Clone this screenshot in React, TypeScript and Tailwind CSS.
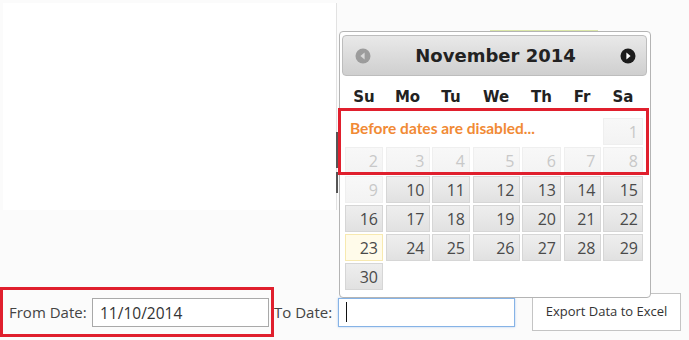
import React from "react";

const COLS = "grid grid-cols-[38px_44px_38px_47px_39px_37px_40px] gap-x-[2.5px]";

type Cell = { n?: number; kind: "empty" | "disabled" | "active" | "today" };

function DayCell({ c }: { c: Cell }) {
  if (c.kind === "empty") return <div className="h-[27px]" />;
  const base =
    "h-[27px] border flex items-center justify-end pr-[4px] text-[16px] leading-none font-['Open_Sans',sans-serif]";
  if (c.kind === "disabled")
    return (
      <div className={`${base} border-[#efefef] bg-gradient-to-b from-[#f8f8f8] to-[#f3f3f3] text-[#c8c8c8]`}>{c.n}</div>
    );
  if (c.kind === "today")
    return <div className={`${base} border-[#f7e9b0] bg-[#fffbea] text-[#4a4a4a]`}>{c.n}</div>;
  return (
    <div className={`${base} border-[#d6d6d6] bg-gradient-to-b from-[#eeeeee] via-[#e8e8e8] to-[#e1e1e1] text-[#4a4a4a]`}>
      {c.n}
    </div>
  );
}

export default function App() {
  const rows: Cell[][] = [];
  const r2: Cell[] = [2, 3, 4, 5, 6, 7, 8].map((n) => ({ n, kind: "disabled" }));
  const r3: Cell[] = [9, 10, 11, 12, 13, 14, 15].map((n) => ({ n, kind: n === 9 ? "disabled" : "active" }));
  const r4: Cell[] = [16, 17, 18, 19, 20, 21, 22].map((n) => ({ n, kind: "active" }));
  const r5: Cell[] = [23, 24, 25, 26, 27, 28, 29].map((n) => ({ n, kind: n === 23 ? "today" : "active" }));
  const r6: Cell[] = [{ n: 30, kind: "active" }, ...Array.from({ length: 6 }, () => ({ kind: "empty" as const }))];
  rows.push(r2, r3, r4, r5, r6);

  return (
    <div className="relative w-[689px] h-[340px] overflow-hidden bg-[#fbfbfb] font-['Open_Sans',sans-serif]">
      {/* page content */}
      <div className="flex flex-col">
        <div className="h-[287px]">
          <div className="ml-[3px] mt-[3px] w-[334px] h-[207px] bg-white border-r border-[#e2e2e2]" />
        </div>
        <div className="h-[50px] flex items-center pl-[9px] text-[15px] text-[#444444]">
          <span className="w-[83px] whitespace-nowrap">From Date:</span>
          <div className="w-[177px] h-[29px] border border-[#a9a9a9] bg-white flex items-center pl-[7px] pt-[3px] text-[15.5px] text-[#333333]">
            11/10/2014
          </div>
          <span className="ml-[5px] w-[64px] whitespace-nowrap">To Date:</span>
          <div className="w-[177px] h-[29px] border border-[#86b3e6] bg-white flex items-center pl-[7px] shadow-[0_0_2px_rgba(100,160,230,0.5)]">
            <span className="block w-px h-[20px] bg-[#111111]" />
          </div>
          <button className="ml-[17px] w-[149px] h-[38px] border border-[#c4c4c4] bg-white text-[13px] text-[#333333]">
            Export Data to Excel
          </button>
        </div>
      </div>

      {/* bits of content hidden behind the popup */}
      <div className="absolute left-[336px] top-[132px] w-[2px] h-[36px] bg-[#555555]" />
      <div className="absolute left-[336px] top-[172px] w-[2px] h-[21px] bg-[#555555]" />
      <div className="absolute left-[490px] top-[30px] w-[108px] h-px bg-[#dbe7a8]" />

      {/* datepicker popup */}
      <div className="absolute left-[339px] top-[31px] w-[312px] h-[267px] border border-[#b4b4b4] rounded-[4px] bg-white">
        <div className="pl-[2px] pr-[3px] pt-[3px]">
          <div className="h-[41px] rounded-[4px] border border-[#bdbdbd] bg-gradient-to-b from-[#e9e9e9] to-[#cfcfcf] flex items-center pl-[12px] pr-[10px]">
            <svg width="16" height="16" viewBox="0 0 16 16">
              <circle cx="8" cy="8" r="7.5" fill="#9c9c9c" />
              <path d="M9.6 4.6 L5.4 8 L9.6 11.4 Z" fill="#d8d8d8" />
            </svg>
            <div className="flex-1 text-center font-['DejaVu_Sans',sans-serif] font-bold text-[18px] text-[#222222]">
              November 2014
            </div>
            <svg width="16" height="16" viewBox="0 0 16 16">
              <circle cx="8" cy="8" r="7.5" fill="#1c1c1c" />
              <path d="M6.4 4.6 L10.6 8 L6.4 11.4 Z" fill="#ffffff" />
            </svg>
          </div>
        </div>
        <div className="pl-[5px]">
          <div className={`${COLS} h-[42px] items-center text-center font-['DejaVu_Sans',sans-serif] font-bold text-[15px] text-[#222222]`}>
            {["Su", "Mo", "Tu", "We", "Th", "Fr", "Sa"].map((d) => (
              <div key={d}>{d}</div>
            ))}
          </div>
          <div className={`${COLS} gap-y-[2px]`}>
            <div className="col-span-6 h-[27px] pl-[5px] pt-[2px] font-['Lato',sans-serif] font-bold text-[15.5px] leading-[17px] text-[#f18a35] whitespace-nowrap">
              Before dates are disabled...
            </div>
            <DayCell c={{ n: 1, kind: "disabled" }} />
            {rows.map((r, i) => r.map((c, j) => <DayCell key={`${i}-${j}`} c={c} />))}
          </div>
        </div>
      </div>

      {/* annotation rectangles */}
      <div className="absolute left-[338px] top-[108px] w-[311px] h-[67px] border-[3px] border-[#e01f2d]" />
      <div className="absolute left-0 top-[287px] w-[274px] h-[50px] border-[3px] border-[#e01f2d]" />
    </div>
  );
}
